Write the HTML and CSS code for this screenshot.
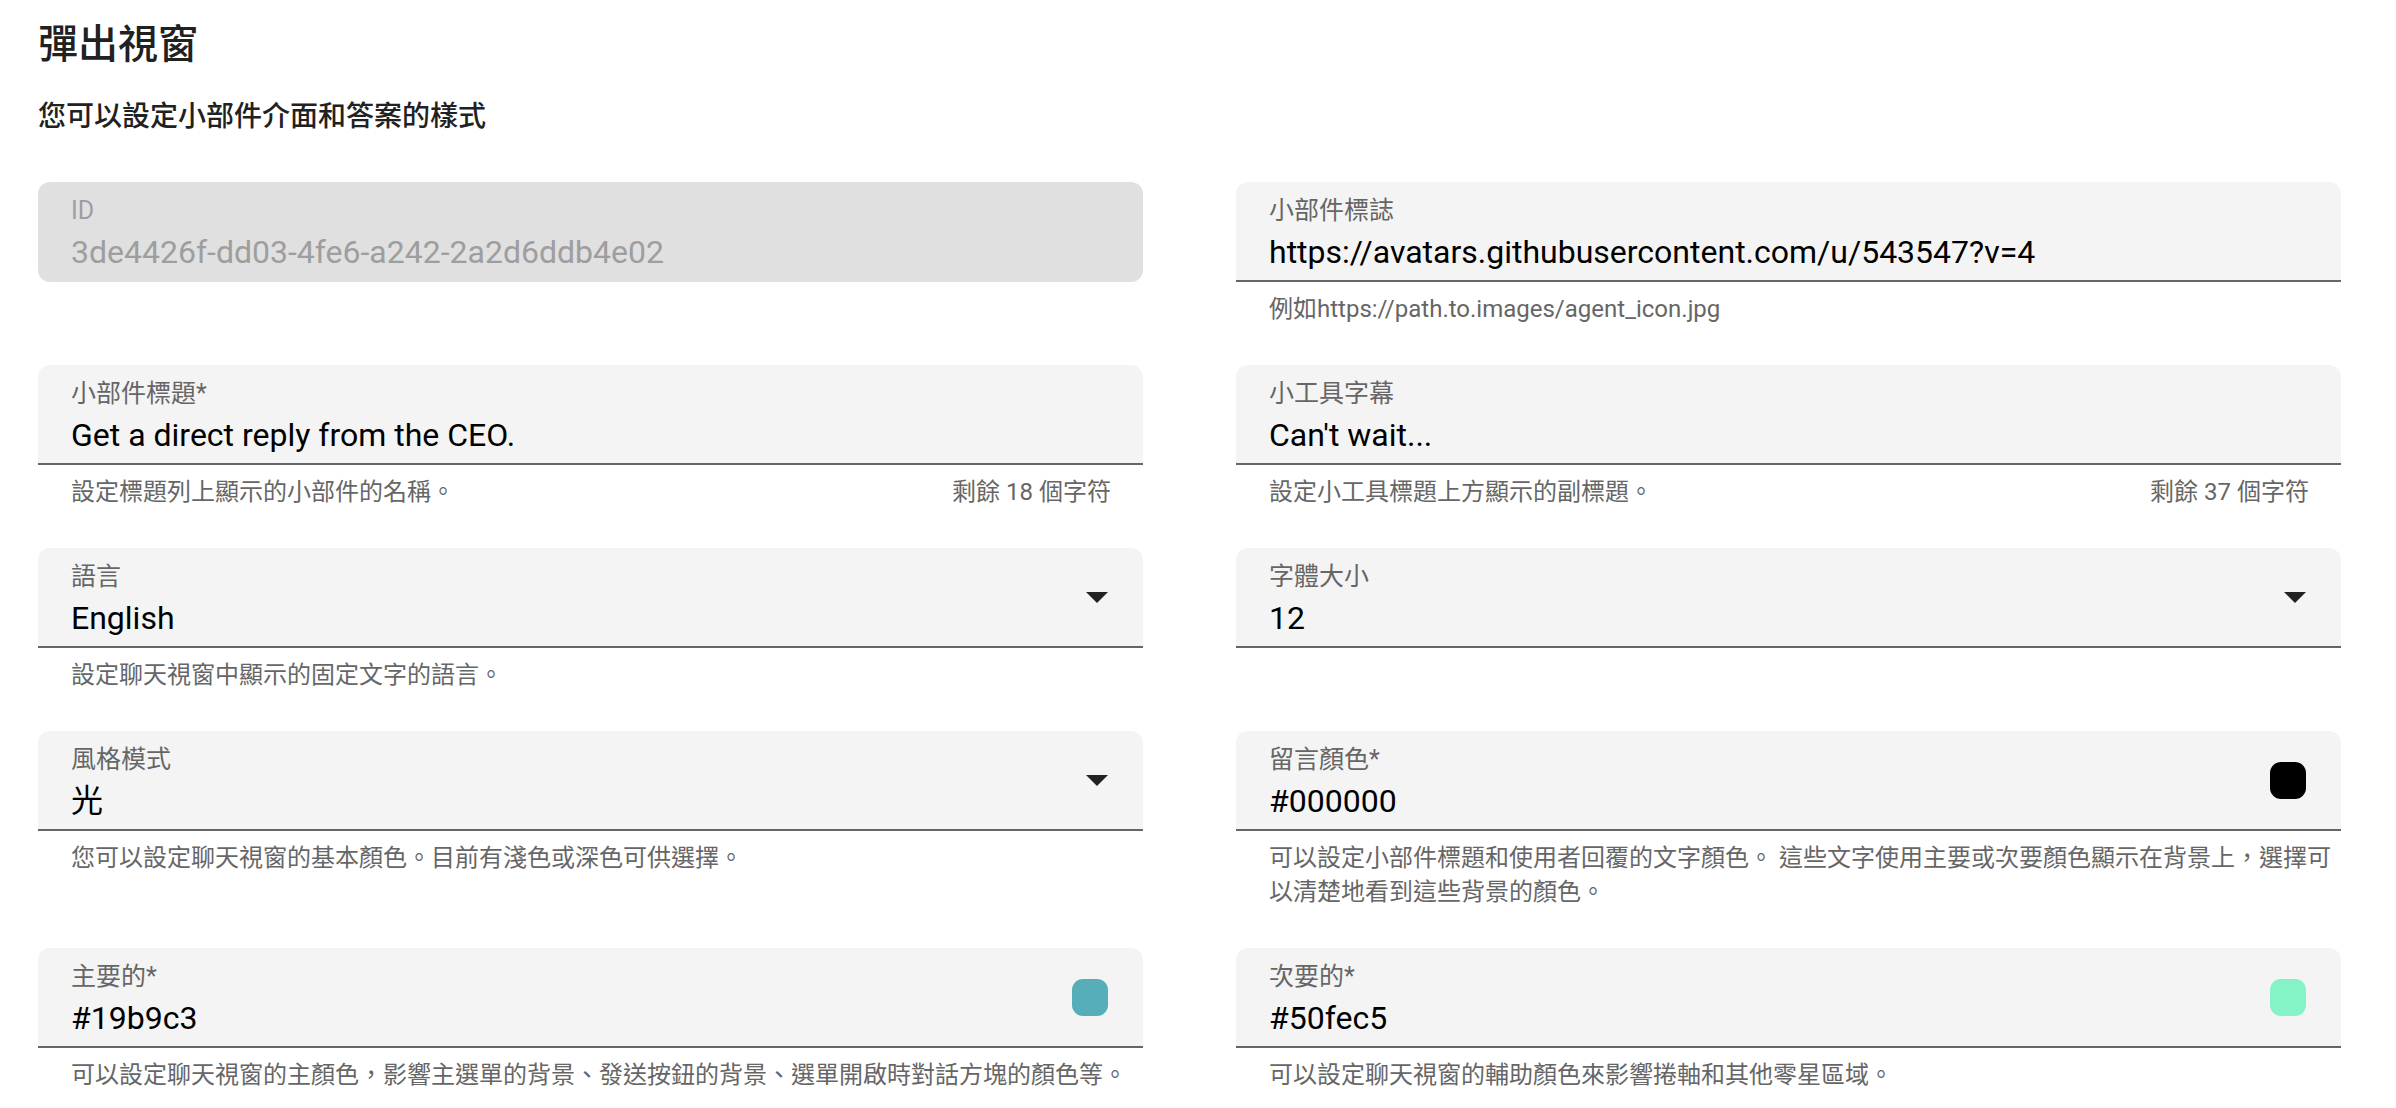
FILE: index.html
```html
<!DOCTYPE html>
<html lang="zh-Hant">
<head>
<meta charset="utf-8">
<title>彈出視窗</title>
<link rel="stylesheet" href="styles.css">
</head>
<body>
<div class="page">
  <h1 class="title">彈出視窗</h1>
  <p class="subtitle">您可以設定小部件介面和答案的樣式</p>

  <div class="grid">
    <div class="cell">
      <div class="field disabled">
        <div class="field-body">
          <div class="label">ID</div>
          <div class="value">3de4426f-dd03-4fe6-a242-2a2d6ddb4e02</div>
        </div>
      </div>
    </div>

    <div class="cell">
      <div class="field">
        <div class="field-body">
          <div class="label">小部件標誌</div>
          <div class="value">https://avatars.githubusercontent.com/u/543547?v=4</div>
        </div>
      </div>
      <div class="helper"><span class="helper-text">例如https://path.to.images/agent_icon.jpg</span></div>
    </div>

    <div class="cell">
      <div class="field">
        <div class="field-body">
          <div class="label">小部件標題*</div>
          <div class="value">Get a direct reply from the CEO.</div>
        </div>
      </div>
      <div class="helper"><span class="helper-text">設定標題列上顯示的小部件的名稱。</span><span class="counter">剩餘 18 個字符</span></div>
    </div>

    <div class="cell">
      <div class="field">
        <div class="field-body">
          <div class="label">小工具字幕</div>
          <div class="value">Can't wait...</div>
        </div>
      </div>
      <div class="helper"><span class="helper-text">設定小工具標題上方顯示的副標題。</span><span class="counter">剩餘 37 個字符</span></div>
    </div>

    <div class="cell">
      <div class="field">
        <div class="field-body">
          <div class="label">語言</div>
          <div class="value">English</div>
        </div>
        <svg class="arrow" width="22" height="11" viewBox="0 0 22 11"><polygon points="0,0 22,0 11,11" fill="#222"/></svg>
      </div>
      <div class="helper"><span class="helper-text">設定聊天視窗中顯示的固定文字的語言。</span></div>
    </div>

    <div class="cell">
      <div class="field">
        <div class="field-body">
          <div class="label">字體大小</div>
          <div class="value">12</div>
        </div>
        <svg class="arrow" width="22" height="11" viewBox="0 0 22 11"><polygon points="0,0 22,0 11,11" fill="#222"/></svg>
      </div>
    </div>

    <div class="cell">
      <div class="field">
        <div class="field-body">
          <div class="label">風格模式</div>
          <div class="value">光</div>
        </div>
        <svg class="arrow" width="22" height="11" viewBox="0 0 22 11"><polygon points="0,0 22,0 11,11" fill="#222"/></svg>
      </div>
      <div class="helper"><span class="helper-text">您可以設定聊天視窗的基本顏色。目前有淺色或深色可供選擇。</span></div>
    </div>

    <div class="cell">
      <div class="field">
        <div class="field-body">
          <div class="label">留言顏色*</div>
          <div class="value">#000000</div>
        </div>
        <span class="swatch swatch-black"></span>
      </div>
      <div class="helper"><span class="helper-text">可以設定小部件標題和使用者回覆的文字顏色。 這些文字使用主要或次要顏色顯示在背景上，選擇可以清楚地看到這些背景的顏色。</span></div>
    </div>

    <div class="cell">
      <div class="field">
        <div class="field-body">
          <div class="label">主要的*</div>
          <div class="value">#19b9c3</div>
        </div>
        <span class="swatch swatch-primary"></span>
      </div>
      <div class="helper"><span class="helper-text">可以設定聊天視窗的主顏色，影響主選單的背景、發送按鈕的背景、選單開啟時對話方塊的顏色等。</span></div>
    </div>

    <div class="cell">
      <div class="field">
        <div class="field-body">
          <div class="label">次要的*</div>
          <div class="value">#50fec5</div>
        </div>
        <span class="swatch swatch-secondary"></span>
      </div>
      <div class="helper"><span class="helper-text">可以設定聊天視窗的輔助顏色來影響捲軸和其他零星區域。</span></div>
    </div>
  </div>
</div>
</body>
</html>
```

FILE: styles.css
```css
html, body {
  margin: 0;
  padding: 0;
  background: #ffffff;
}

body {
  font-family: Roboto, "Noto Sans CJK TC", sans-serif;
  color: #212121;
}

.page {
  padding: 21px 55px 0 38px;
}

.title {
  margin: 0;
  font-size: 40px;
  line-height: 48px;
  font-weight: 500;
  color: #212121;
}

.subtitle {
  margin: 30px 0 0;
  font-size: 28px;
  line-height: 36px;
  font-weight: 500;
  color: #212121;
}

.grid {
  margin-top: 47px;
  display: grid;
  grid-template-columns: 1fr 1fr;
  column-gap: 93px;
  row-gap: 39px;
  align-items: start;
}

.cell {
  display: flex;
  flex-direction: column;
  min-width: 0;
}

.field {
  box-sizing: border-box;
  height: 100px;
  display: flex;
  align-items: center;
  padding: 0 35px 0 33px;
  background: #f4f4f4;
  border-radius: 12px 12px 0 0;
  border-bottom: 2px solid #666666;
}

.field.disabled {
  background: #e0e0e0;
  border-radius: 12px;
  border-bottom-color: transparent;
}

.field-body {
  flex: 1;
  align-self: stretch;
  padding-top: 15px;
  min-width: 0;
}

.label {
  font-size: 25px;
  line-height: 28px;
  color: #666666;
  white-space: nowrap;
}

.value {
  margin-top: 9px;
  font-size: 32px;
  line-height: 36px;
  color: #000000;
  white-space: nowrap;
}

.disabled .label,
.disabled .value {
  color: #9e9e9e;
}

.arrow {
  flex: none;
  display: block;
}

.swatch {
  flex: none;
  display: block;
  width: 36px;
  height: 37px;
  border-radius: 11px;
}

.swatch-black { background: #000000; }
.swatch-primary { background: #55aeb8; }
.swatch-secondary { background: #84f4c6; }

.helper {
  display: flex;
  align-items: flex-start;
  margin-top: 10px;
  padding: 0 0 0 33px;
  font-size: 24px;
  line-height: 34px;
  color: #666666;
}

.helper-text {
  flex: 1;
  min-width: 0;
}

.counter {
  flex: none;
  margin-left: 16px;
  margin-right: 32px;
  white-space: nowrap;
}
```
